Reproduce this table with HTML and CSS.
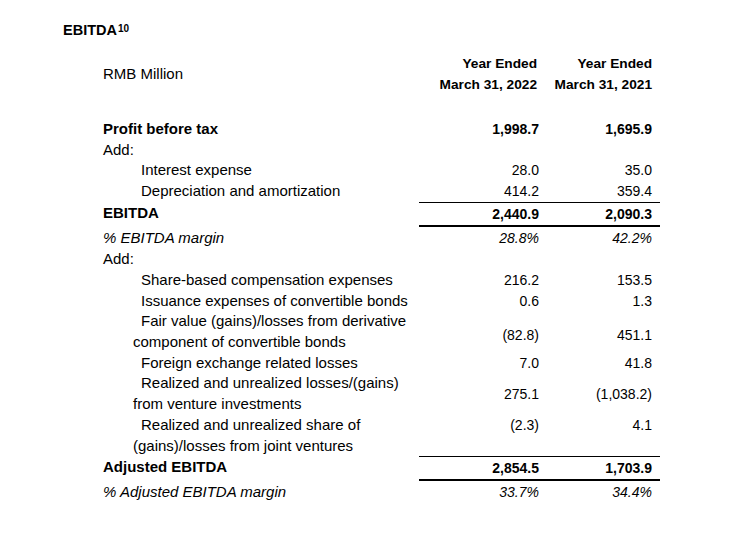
FILE: index.html
```html
<!DOCTYPE html>
<html>
<head>
<meta charset="utf-8">
<link rel="stylesheet" href="styles.css">
</head>
<body>
<div class="page">
  <div class="title">EBITDA<sup class="fn">10</sup></div>
  <div class="table">
    <div class="row head">
      <div class="label unit">RMB Million</div>
      <div class="hcell">Year Ended<br>March 31, 2022</div>
      <div class="hcell">Year Ended<br>March 31, 2021</div>
    </div>

    <div class="row bold first">
      <div class="label">Profit before tax</div>
      <div class="num">1,998.7</div>
      <div class="num c2">1,695.9</div>
    </div>
    <div class="row">
      <div class="label">Add:</div>
      <div class="num"></div>
      <div class="num c2"></div>
    </div>
    <div class="row">
      <div class="label ind">Interest expense</div>
      <div class="num">28.0</div>
      <div class="num c2">35.0</div>
    </div>
    <div class="row">
      <div class="label ind">Depreciation and amortization</div>
      <div class="num">414.2</div>
      <div class="num c2">359.4</div>
    </div>
    <div class="row bold total">
      <div class="label">EBITDA</div>
      <div class="num">2,440.9</div>
      <div class="num c2">2,090.3</div>
    </div>
    <div class="row ital after">
      <div class="label">% EBITDA margin</div>
      <div class="num">28.8%</div>
      <div class="num c2">42.2%</div>
    </div>
    <div class="row add2">
      <div class="label">Add:</div>
      <div class="num"></div>
      <div class="num c2"></div>
    </div>
    <div class="row">
      <div class="label ind">Share-based compensation expenses</div>
      <div class="num">216.2</div>
      <div class="num c2">153.5</div>
    </div>
    <div class="row">
      <div class="label ind">Issuance expenses of convertible bonds</div>
      <div class="num">0.6</div>
      <div class="num c2">1.3</div>
    </div>
    <div class="row">
      <div class="label wrap">Fair value (gains)/losses from derivative<br>component of convertible bonds</div>
      <div class="num mid low">(82.8)</div>
      <div class="num c2 mid low">451.1</div>
    </div>
    <div class="row">
      <div class="label ind">Foreign exchange related losses</div>
      <div class="num">7.0</div>
      <div class="num c2">41.8</div>
    </div>
    <div class="row">
      <div class="label wrap">Realized and unrealized losses/(gains)<br>from venture investments</div>
      <div class="num mid">275.1</div>
      <div class="num c2 mid">(1,038.2)</div>
    </div>
    <div class="row">
      <div class="label wrap">Realized and unrealized share of<br>(gains)/losses from joint ventures</div>
      <div class="num">(2.3)</div>
      <div class="num c2">4.1</div>
    </div>
    <div class="row bold total">
      <div class="label">Adjusted EBITDA</div>
      <div class="num">2,854.5</div>
      <div class="num c2">1,703.9</div>
    </div>
    <div class="row ital after">
      <div class="label">% Adjusted EBITDA margin</div>
      <div class="num">33.7%</div>
      <div class="num c2">34.4%</div>
    </div>
  </div>
</div>
</body>
</html>
```
FILE: styles.css
```css
html, body {
  margin: 0;
  padding: 0;
  background: #ffffff;
}

body {
  font-family: "Liberation Sans", Arial, sans-serif;
  color: #000000;
}

.page {
  padding: 20px 0 0 63px;
}

.title {
  font-weight: bold;
  font-size: 14.5px;
  line-height: 21px;
}

.fn {
  font-size: 10px;
  vertical-align: 3px;
  line-height: 0;
  margin-left: 1px;
}

.table {
  margin-left: 40px;
  margin-top: 12px;
}

.row {
  display: grid;
  grid-template-columns: 316px 126px 115px;
  line-height: 20.7px;
}

.label {
  font-size: 15px;
  white-space: nowrap;
}

.label.ind {
  padding-left: 38px;
}

.label.wrap {
  padding-left: 30px;
  text-indent: 8px;
}

.num {
  font-size: 14px;
  text-align: right;
  padding-right: 6px;
  align-self: start;
}

.num.c2 {
  padding-right: 8px;
}

.num.mid {
  align-self: center;
}

.num.low {
  padding-top: 6px;
}

.head {
  margin-bottom: 24px;
}

.head .unit {
  align-self: center;
}

.hcell {
  font-size: 13.7px;
  font-weight: bold;
  text-align: right;
  padding-right: 8px;
  line-height: 21px;
}

.bold .label,
.bold .num {
  font-weight: bold;
}

.ital .label,
.ital .num {
  font-style: italic;
}

.total .num {
  border-top: 1px solid #000000;
  border-bottom: 2px solid #000000;
}

.total .label,
.total .num {
  padding-top: 1px;
  line-height: 20.7px;
}

.after {
  padding-top: 1px;
}

.add2 {
  padding-top: 1px;
}
```
